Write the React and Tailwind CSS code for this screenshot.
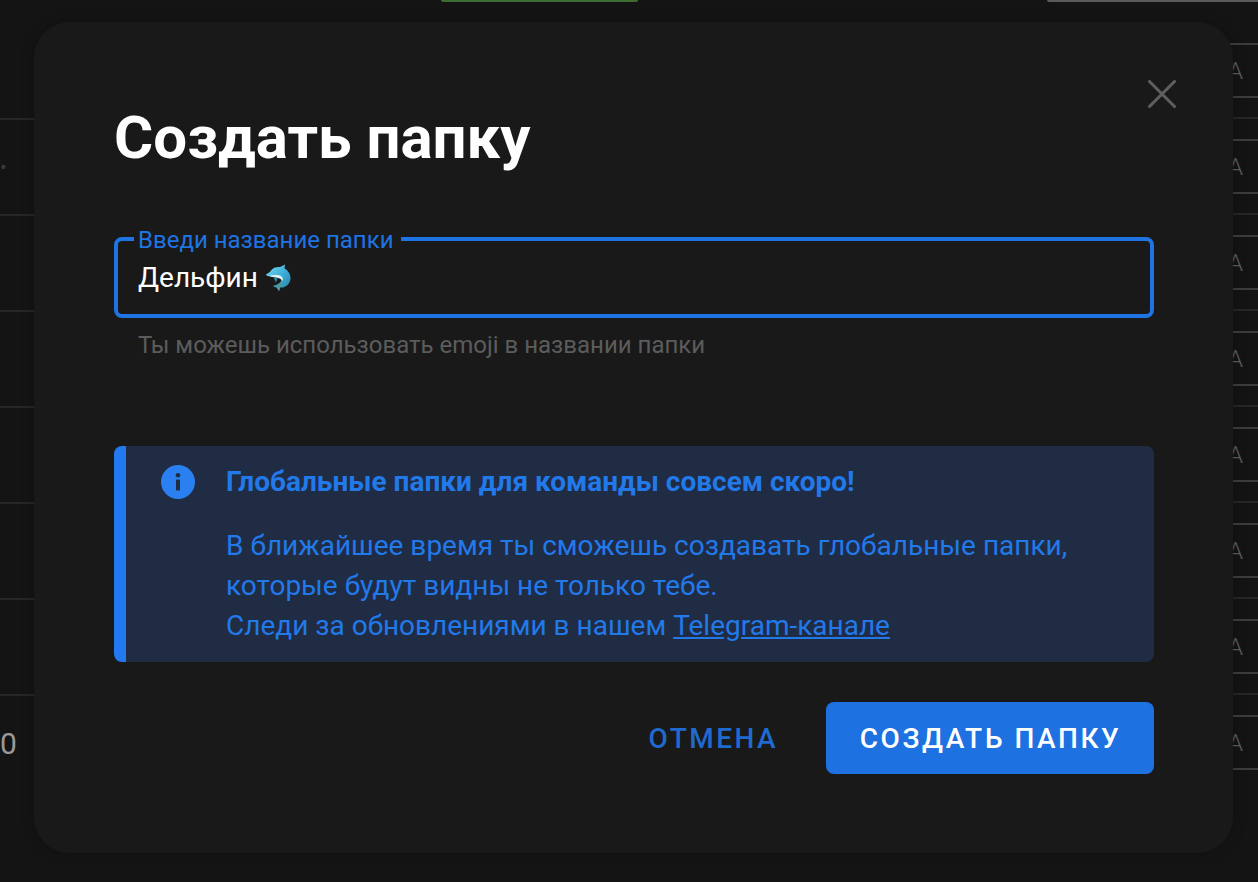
import React from "react";

const leftMarks = ["", "•", "", "", "", "", "", "0"];

function LeftRow({ mark, last }) {
  return (
    <div className={"h-[96px] flex items-center text-[30px] leading-none -ml-[6px] shrink-0 " + (last ? "" : "border-b-2 border-[#262626]")}>
      <span className={mark === "0" ? "ml-[6px] text-[#9a9a9a]" : "ml-[6px] text-[#3a3a3a] text-[20px]"}>{mark}</span>
    </div>
  );
}

function RightRow({ last }) {
  return (
    <div className="h-[96px] shrink-0 flex flex-col">
      <div className="h-[53px] border-t-2 border-[#3c3c3c] flex items-center text-[24px] leading-none text-[#5c5c5c] font-light">
        A
      </div>
      <div className="h-[21px] border-t-2 border-[#3c3c3c]" />
      {last ? null : <div className="h-[22px] border-t-2 border-[#262626]" />}
    </div>
  );
}

function Dolphin() {
  return (
    <svg width="27" height="28" viewBox="0 0 27 28" className="shrink-0">
      <defs>
        <linearGradient id="dolphinBody" x1="0" y1="0" x2="1" y2="1">
          <stop offset="0" stopColor="#7adcf5" />
          <stop offset="0.55" stopColor="#3aaad6" />
          <stop offset="1" stopColor="#2a7f9c" />
        </linearGradient>
      </defs>
      <path d="M1 10.5 C3 9 5 8.5 6 6.5 C8 3.5 12 2.5 15 3 L20 0.5 L19.5 4.5 C23 6.5 26 10.5 25.5 15 C25 19 22 22.5 18 23.5 L15.5 23 L14 27 L11.5 23.5 L8 22 C11 21.5 14 20 15.5 18 C17 16 16 14 14 13.5 C11 13 8 13 5 12.5 C3 12.2 1.5 12 1 10.5 Z" fill="url(#dolphinBody)" />
      <path d="M4.5 11.8 C8 11 12 10.8 15 11.5 C17.5 12.5 18.5 15 17.5 17 C16 15 14 14 11 13.6 C8.5 13.2 6 13 4.5 11.8 Z" fill="#e3f4f8" />
      <path d="M8.5 13.5 L12.5 14 L11 18.5 Z" fill="#2b8aad" />
      <path d="M8 22 C11 21.5 14 20 15.5 18 L18 23.5 L15.5 23 L14 27 L11.5 23.5 Z" fill="#4a9a9c" />
    </svg>
  );
}

function InfoIcon() {
  return (
    <svg width="34" height="34" viewBox="0 0 34 34" className="shrink-0">
      <circle cx="17" cy="17" r="17" fill="#2a80f0" />
      <circle cx="17" cy="10.2" r="2.3" fill="#1f2b43" />
      <rect x="15" y="14.5" width="4" height="11" rx="0.8" fill="#1f2b43" />
    </svg>
  );
}

export default function App() {
  return (
    <div className="relative h-[882px] w-full overflow-hidden bg-[#141414] font-['Roboto',sans-serif]">
      {/* Dimmed page behind the dialog */}
      <div className="flex h-[2px] overflow-hidden">
        <div className="ml-[441px] shrink-0 w-[197px] h-[2px] rounded-b-[3px] border-b-2 border-[#3f6b35]" />
        <div className="ml-[409px] shrink-0 w-[220px] h-[2px] rounded-bl-[3px] border-b-2 border-[#5a5a5a]" />
      </div>
      <div className="flex justify-between h-[880px]">
        <div className="w-[34px] overflow-hidden flex flex-col pt-[22px]">
          {leftMarks.map((m, i) => (
            <LeftRow key={i} mark={m} last={i === leftMarks.length - 1} />
          ))}
        </div>
        <div className="w-[30px] overflow-hidden flex flex-col pt-[41px]">
          {[0, 1, 2, 3, 4, 5, 6, 7].map((i) => (
            <RightRow key={i} last={i === 7} />
          ))}
        </div>
      </div>

      {/* Dialog */}
      <div className="absolute left-[34px] top-[22px] w-[1199px] h-[831px] rounded-[36px] bg-[#191919] shadow-[0_0_14px_rgba(0,0,0,0.22)] pl-[80px] pr-[79px] pt-[84px]">
        <button className="absolute right-[57px] top-[58px] w-[28px] h-[28px] text-[#5f5f5f]">
          <svg width="28" height="28" viewBox="0 0 28 28" fill="none" stroke="currentColor" strokeWidth="3" strokeLinecap="round">
            <path d="M1.5 1.5 L26.5 26.5 M26.5 1.5 L1.5 26.5" />
          </svg>
        </button>

        <h1 className="text-[60px] leading-[64px] font-bold text-white">Создать папку</h1>

        <div className="relative mt-[67px] h-[81px] rounded-[8px] border-[4px] border-[#1f74e3] px-[20px] flex items-center gap-[7px]">
          <span className="text-[28px] leading-[32px] text-white">Дельфин</span>
          <Dolphin />
          <label className="absolute left-[16px] -top-[15px] pl-[4px] pr-[7px] bg-[#191919] text-[24px] leading-[28px] text-[#1f74e3]">
            Введи название папки
          </label>
        </div>
        <p className="mt-[12px] pl-[24px] text-[24px] leading-[30px] text-[#5c5c5c]">
          Ты можешь использовать emoji в названии папки
        </p>

        <div className="mt-[86px] h-[216px] rounded-[8px] overflow-hidden bg-[#202c44] border-l-[12px] border-[#2279f0] flex pl-[35px] pt-[19px]">
          <InfoIcon />
          <div className="ml-[31px] text-[#2279ea]">
            <div className="text-[28px] leading-[34px] font-bold">Глобальные папки для команды совсем скоро!</div>
            <div className="mt-[27px] text-[28px] leading-[40px]">
              В ближайшее время ты сможешь создавать глобальные папки,
              <br />
              которые будут видны не только тебе.
              <br />
              Следи за обновлениями в нашем <a className="underline">Telegram-канале</a>
            </div>
          </div>
        </div>

        <div className="mt-[40px] flex justify-end items-center gap-[48px]">
          <button className="pt-[1px] pl-[1px] text-[28px] leading-[32px] font-medium tracking-[2.45px] text-[#1e6ad0]">ОТМЕНА</button>
          <button className="w-[328px] h-[72px] pt-[1px] pl-[1px] rounded-[8px] bg-[#1d71e0] text-[28px] leading-[32px] font-medium tracking-[2.55px] text-white">
            СОЗДАТЬ ПАПКУ
          </button>
        </div>
      </div>
    </div>
  );
}
